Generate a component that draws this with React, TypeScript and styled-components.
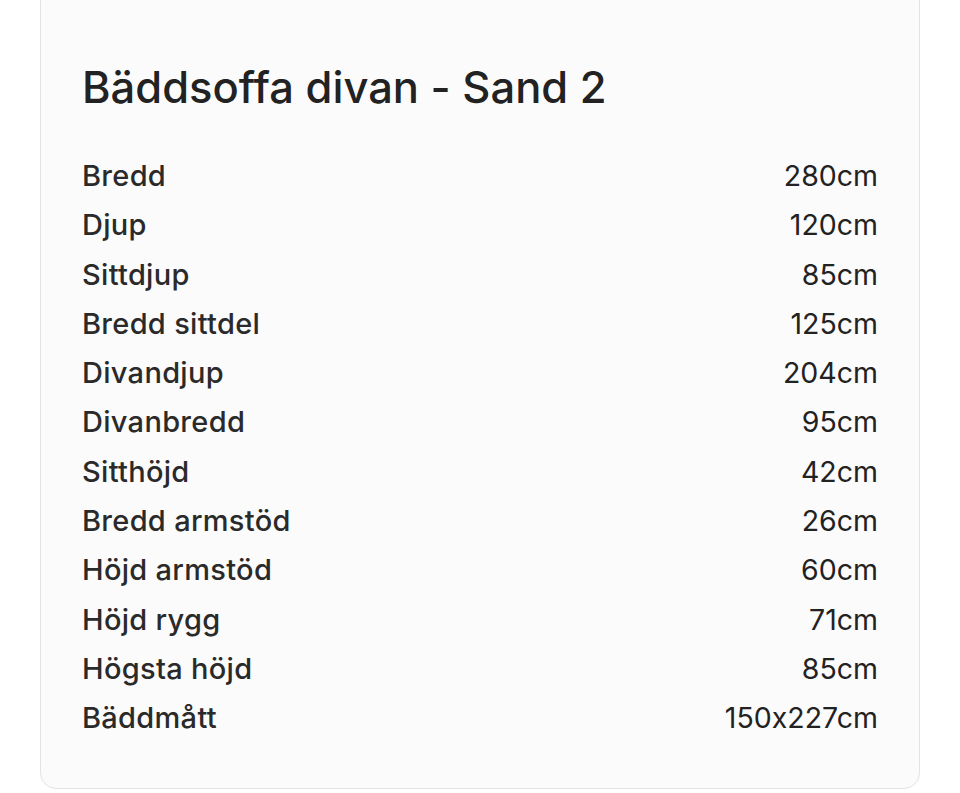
import React from 'react'
import styled, { createGlobalStyle } from 'styled-components'

const GlobalStyle = createGlobalStyle`
  html, body {
    margin: 0;
    padding: 0;
    background: #ffffff;
  }
  body {
    font-family: Inter, "Noto Sans", sans-serif;
    font-feature-settings: "calt" 0;
    color: #222222;
  }
`

interface Spec {
  label: string
  value: string
}

const specs: Spec[] = [
  { label: 'Bredd', value: '280cm' },
  { label: 'Djup', value: '120cm' },
  { label: 'Sittdjup', value: '85cm' },
  { label: 'Bredd sittdel', value: '125cm' },
  { label: 'Divandjup', value: '204cm' },
  { label: 'Divanbredd', value: '95cm' },
  { label: 'Sitthöjd', value: '42cm' },
  { label: 'Bredd armstöd', value: '26cm' },
  { label: 'Höjd armstöd', value: '60cm' },
  { label: 'Höjd rygg', value: '71cm' },
  { label: 'Högsta höjd', value: '85cm' },
  { label: 'Bäddmått', value: '150x227cm' },
]

const App = () => {
  return (
    <Page>
      <GlobalStyle />
      <Card>
        <Title>Bäddsoffa divan - Sand 2</Title>
        <SpecList>
          {specs.map(spec => (
            <SpecRow key={spec.label}>
              <Label>{spec.label}</Label>
              <Value>{spec.value}</Value>
            </SpecRow>
          ))}
        </SpecList>
      </Card>
    </Page>
  )
}

const Page = styled.div`
  padding: 0 40px;
  height: 793px;
  overflow: hidden;
`

const Card = styled.div`
  margin-top: -30px;
  box-sizing: border-box;
  width: 880px;
  background: #fbfbfb;
  border: 1.5px solid #e4e4e4;
  border-radius: 16px;
  padding: 90px 41px 45px 41px;
`

const Title = styled.h1`
  margin: 0 0 38px 0;
  font-size: 43.5px;
  font-weight: 500;
  line-height: 52px;
  letter-spacing: 0;
  color: #222222;
`

const SpecList = styled.div`
  display: flex;
  flex-direction: column;
`

const SpecRow = styled.div`
  display: flex;
  justify-content: space-between;
  align-items: baseline;
  height: 49.3px;
  font-size: 29px;
  line-height: 49px;
`

const Label = styled.span`
  font-weight: 500;
  letter-spacing: 0.3px;
  color: #2a2a2a;
`

const Value = styled.span`
  font-weight: 400;
  font-size: 28.5px;
`

export default App
